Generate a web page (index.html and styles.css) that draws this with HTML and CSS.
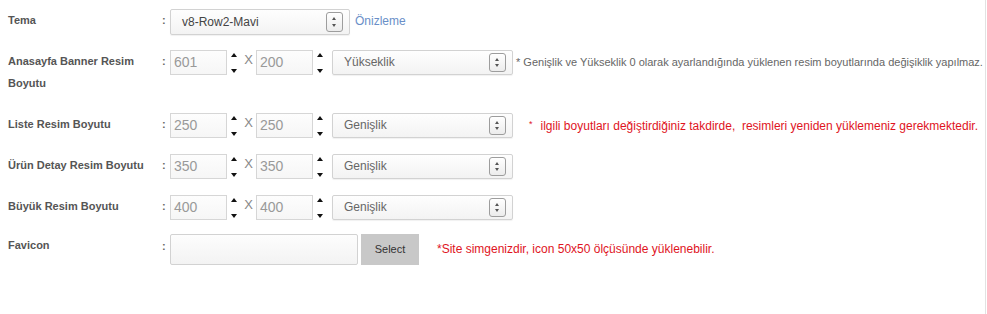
FILE: index.html
```html
<!DOCTYPE html>
<html lang="tr">
<head>
<meta charset="utf-8">
<title>Ayarlar</title>
<link rel="stylesheet" href="styles.css">
</head>
<body>
<div class="panel">
  <div class="row">
    <div class="label">Tema</div>
    <div class="colon">:</div>
    <div class="field">
      <div class="select select--theme"><span>v8-Row2-Mavi</span><i class="sel-btn"></i></div>
      <a class="preview" href="#">Önizleme</a>
    </div>
  </div>

  <div class="row row--tall">
    <div class="label">Anasayfa Banner Resim Boyutu</div>
    <div class="colon">:</div>
    <div class="field">
      <div class="num">601</div><div class="spin"><i class="up"></i><i class="down"></i></div>
      <span class="x">X</span>
      <div class="num">200</div><div class="spin"><i class="up"></i><i class="down"></i></div>
      <div class="select"><span>Yükseklik</span><i class="sel-btn"></i></div>
      <span class="note">* Genişlik ve Yükseklik 0 olarak ayarlandığında yüklenen resim boyutlarında değişiklik yapılmaz.</span>
    </div>
  </div>

  <div class="row">
    <div class="label">Liste Resim Boyutu</div>
    <div class="colon">:</div>
    <div class="field">
      <div class="num">250</div><div class="spin"><i class="up"></i><i class="down"></i></div>
      <span class="x">X</span>
      <div class="num">250</div><div class="spin"><i class="up"></i><i class="down"></i></div>
      <div class="select"><span>Genişlik</span><i class="sel-btn"></i></div>
      <span class="warn"><span class="star">*</span>ilgili boyutları değiştirdiğiniz takdirde,&nbsp; resimleri yeniden yüklemeniz gerekmektedir.</span>
    </div>
  </div>

  <div class="row">
    <div class="label">Ürün Detay Resim Boyutu</div>
    <div class="colon">:</div>
    <div class="field">
      <div class="num">350</div><div class="spin"><i class="up"></i><i class="down"></i></div>
      <span class="x">X</span>
      <div class="num">350</div><div class="spin"><i class="up"></i><i class="down"></i></div>
      <div class="select"><span>Genişlik</span><i class="sel-btn"></i></div>
    </div>
  </div>

  <div class="row">
    <div class="label">Büyük Resim Boyutu</div>
    <div class="colon">:</div>
    <div class="field">
      <div class="num">400</div><div class="spin"><i class="up"></i><i class="down"></i></div>
      <span class="x">X</span>
      <div class="num">400</div><div class="spin"><i class="up"></i><i class="down"></i></div>
      <div class="select"><span>Genişlik</span><i class="sel-btn"></i></div>
    </div>
  </div>

  <div class="row row--file">
    <div class="label">Favicon</div>
    <div class="colon colon--file">:</div>
    <div class="field">
      <div class="file-input"></div>
      <div class="file-btn">Select</div>
      <span class="warn warn--file">*Site simgenizdir, icon 50x50 ölçüsünde yüklenebilir.</span>
    </div>
  </div>
</div>
</body>
</html>
```

FILE: styles.css
```css
html, body {
  margin: 0;
  padding: 0;
  background: #fff;
}

body {
  font-family: "Liberation Sans", Arial, Helvetica, sans-serif;
  color: #555;
}

.panel {
  box-sizing: border-box;
  width: 986px;
  height: 314px;
  padding: 9px 0 0 8px;
  border-right: 1px solid #e2e2e2;
  display: flex;
  flex-direction: column;
  gap: 15px;
}

.row {
  display: grid;
  grid-template-columns: 154px 8px 1fr;
  min-height: 26px;
  align-items: start;
}

.row--tall .label {
  padding-bottom: 4px;
}

.row--file {
  margin-top: -2px;
}

.label {
  font-size: 11px;
  font-weight: bold;
  line-height: 22px;
  color: #555;
  width: 145px;
}

.colon {
  font-size: 11px;
  line-height: 22px;
  font-weight: bold;
  color: #666;
}

.colon--file {
  line-height: 24px;
}

.field {
  display: flex;
  align-items: flex-start;
}

.num {
  box-sizing: border-box;
  width: 57px;
  height: 25px;
  border: 1px solid #d6d6d6;
  background: linear-gradient(#fdfdfd, #f6f6f6);
  font-size: 14px;
  line-height: 23px;
  padding-left: 3px;
  color: #999;
}

.spin {
  width: 14px;
  height: 24px;
  display: flex;
  flex-direction: column;
  justify-content: space-between;
  align-items: center;
  padding: 3px 0 1px;
  box-sizing: border-box;
}

.spin i {
  width: 0;
  height: 0;
  border-left: 3px solid transparent;
  border-right: 3px solid transparent;
}

.spin .up {
  border-bottom: 4px solid #111;
}

.spin .down {
  border-top: 4px solid #111;
}

.x {
  width: 15px;
  text-align: center;
  font-size: 13px;
  line-height: 20px;
  color: #888;
}

.select {
  box-sizing: border-box;
  position: relative;
  width: 181px;
  height: 25px;
  margin-left: 5px;
  border: 1px solid #d2d2d2;
  border-radius: 2px;
  background: linear-gradient(#fefefe, #f3f3f3);
  box-shadow: 0 1px 1px rgba(0, 0, 0, 0.06);
  font-size: 12px;
  line-height: 23px;
  padding-left: 11px;
  color: #666;
}

.select--theme {
  width: 180px;
  height: 26px;
  margin-left: 0;
  line-height: 24px;
  color: #444;
}

.sel-btn {
  position: absolute;
  right: 6px;
  top: 2px;
  width: 15px;
  height: 17px;
  border: 1px solid #9d9d9d;
  border-radius: 3px;
  background: linear-gradient(#ffffff, #ececec);
  box-shadow: inset 0 1px 0 #fff;
}

.select--theme .sel-btn {
  top: 2px;
  height: 18px;
}

.sel-btn::before,
.sel-btn::after {
  content: "";
  position: absolute;
  left: 5px;
  width: 0;
  height: 0;
  border-left: 2.5px solid transparent;
  border-right: 2.5px solid transparent;
}

.sel-btn::before {
  top: 4px;
  border-bottom: 3px solid #555;
}

.sel-btn::after {
  bottom: 4px;
  border-top: 3px solid #555;
}

.preview {
  margin-left: 5px;
  font-size: 12px;
  line-height: 24px;
  color: #6a8fc8;
  text-decoration: none;
}

.note {
  margin-left: 3px;
  font-size: 11px;
  line-height: 24px;
  color: #666;
  white-space: nowrap;
}

.warn {
  margin-left: 16px;
  font-size: 12px;
  line-height: 22px;
  color: #e0141e;
  white-space: nowrap;
}

.warn .star {
  font-size: 9px;
  margin-right: 8px;
  vertical-align: 3px;
}

.file-input {
  box-sizing: border-box;
  width: 188px;
  height: 31px;
  border: 1px solid #d2d2d2;
  border-radius: 2px;
  background: linear-gradient(#fdfdfd, #f3f3f3);
}

.file-btn {
  width: 58px;
  height: 31px;
  margin-left: 3px;
  background: #c8c8c8;
  font-size: 11px;
  line-height: 31px;
  text-align: center;
  color: #333;
}

.warn--file {
  margin-left: 18px;
  line-height: 30px;
}
```
